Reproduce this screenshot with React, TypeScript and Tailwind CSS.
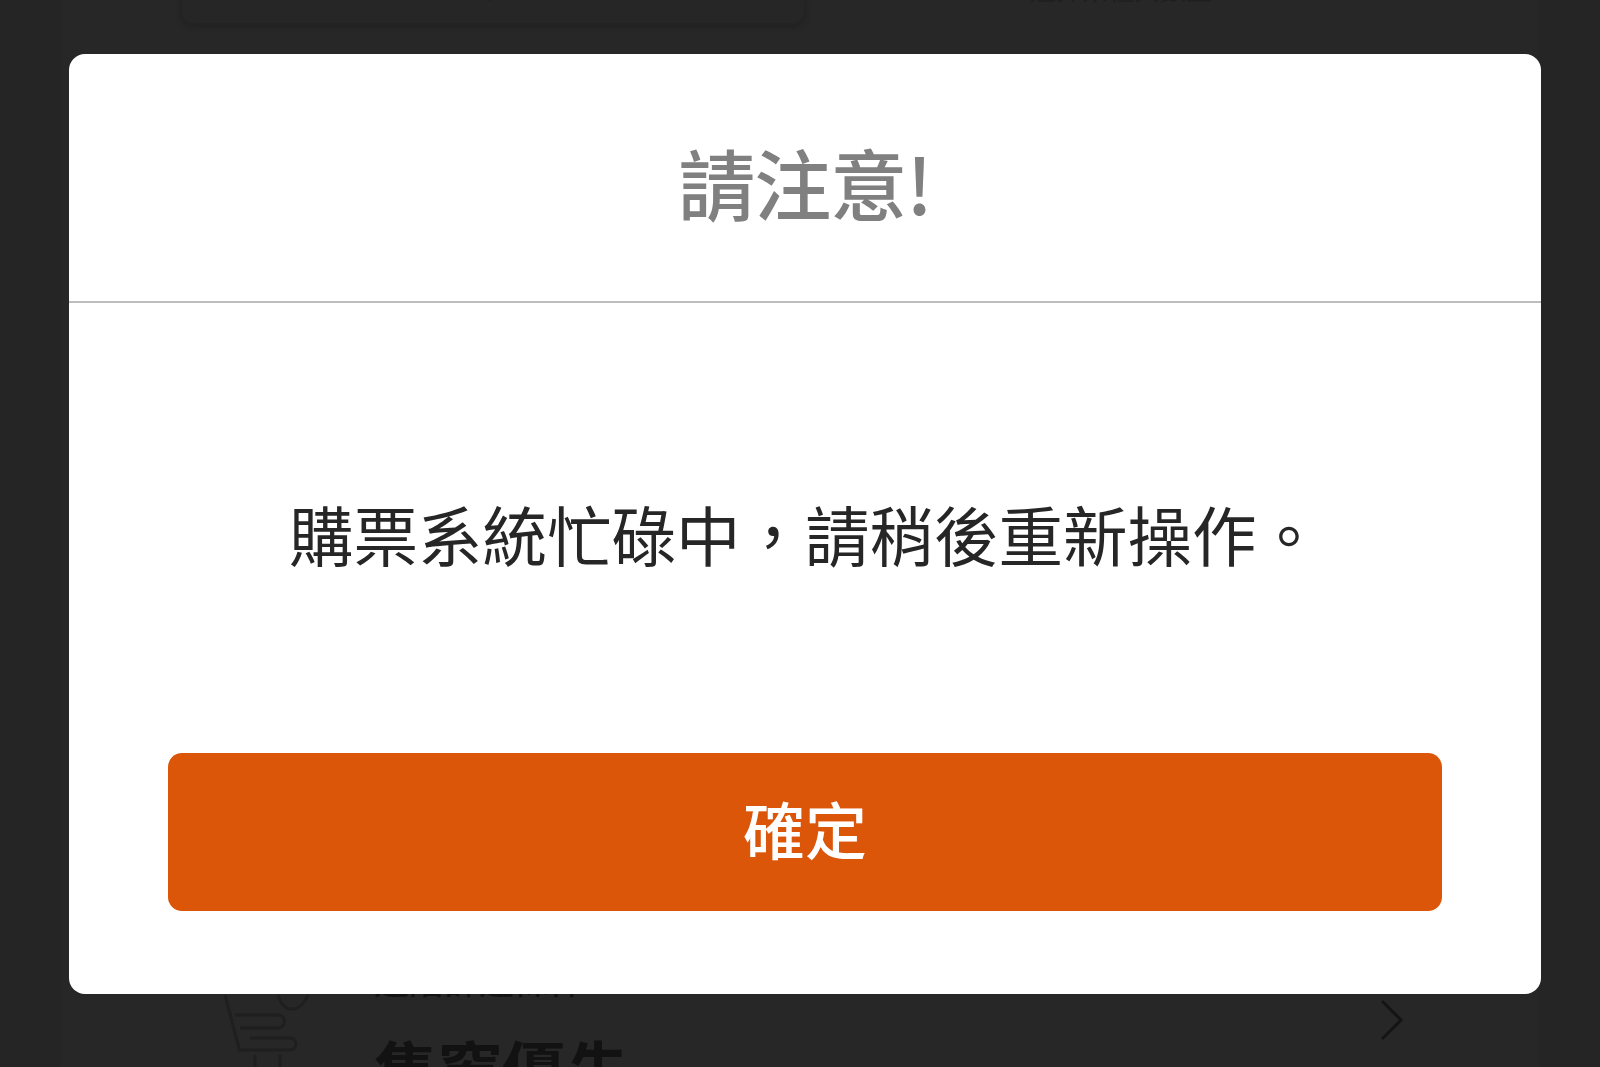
const FONT = "font-['Noto_Sans_CJK_TC','Noto_Sans_CJK_SC',sans-serif]";

// 背景那張被遮罩蓋住的頁面
const BackgroundPage = () => (
  <div className="mx-[62px] flex h-full flex-col justify-between overflow-hidden bg-[#272727]">
    <div className="flex gap-[224px] pl-[118px]">
      <div className="flex h-[26px] w-[626px] items-end justify-center rounded-b-[14px] border-x-2 border-b-[3px] border-[#232323] bg-[#262626] shadow-[0_2px_4px_#222222]">
        <span className="mb-[23px] pl-[4px] text-[26px] leading-none text-[#1f1f1f]">選擇場次日期</span>
      </div>
      <span className="mt-[-24px] text-[26px] leading-none text-[#1f1f1f]">選擇票種與數量</span>
    </div>

    <div className="flex h-[100px] items-start">
      <svg className="ml-[158px] mt-[-3px] h-[103px] w-[90px] shrink-0" viewBox="0 0 90 103" fill="none" stroke="#1f1f1f" strokeWidth="3">
        <path d="M5 31l15 57" />
        <path d="M15 51h43a6.500 6.500 0 0 1 0 13H20" />
        <path d="M30 74h40a6 6 0 0 1 0 12H20" />
        <path d="M58 31q4 14 14 14t16-14" />
        <path d="M35 91v12M60 91v12" />
      </svg>
      <div className="ml-[64px] flex min-w-0 flex-1 flex-col">
        <span className="mt-[-6px] text-[35px] font-medium leading-[35px] text-[#121212]">進階篩選條件</span>
        <span className="mt-[39px] text-[64px] font-bold leading-[64px] text-[#121212]">售窗優先</span>
      </div>
      <svg className="mr-[134px] mt-[32px] h-[42px] w-[24px] shrink-0" viewBox="0 0 24 42" fill="none" stroke="#141414" strokeWidth="3">
        <path d="M2 2l19 19L2 40" />
      </svg>
    </div>
  </div>
);

export default function App() {
  return (
    <div className={`${FONT} relative h-[1067px] w-[1600px] overflow-hidden bg-[#252525]`}>
      <BackgroundPage />

      {/* 彈出視窗 */}
      <div className="absolute left-[69px] top-[54px] flex h-[940px] w-[1472px] flex-col rounded-[16px] bg-white">
        <div className="flex h-[249px] shrink-0 items-center justify-center border-b-2 border-[#bdbdbd] pt-[8px]">
          <h1 className="tracking-[-1px] text-[77px] font-medium leading-none text-[#808080]">請注意!</h1>
        </div>

        <div className="flex flex-1 items-center justify-center pt-[10px]">
          <p className="text-[64.5px] leading-none text-[#262626]">購票系統忙碌中，請稍後重新操作。</p>
        </div>

        <div className="px-[99px] pb-[83px]">
          <button className="flex h-[158px] w-full items-center justify-center rounded-[14px] bg-[#dc560a] pb-[8px] text-[62px] font-medium leading-none text-white">
            確定
          </button>
        </div>
      </div>
    </div>
  );
}
